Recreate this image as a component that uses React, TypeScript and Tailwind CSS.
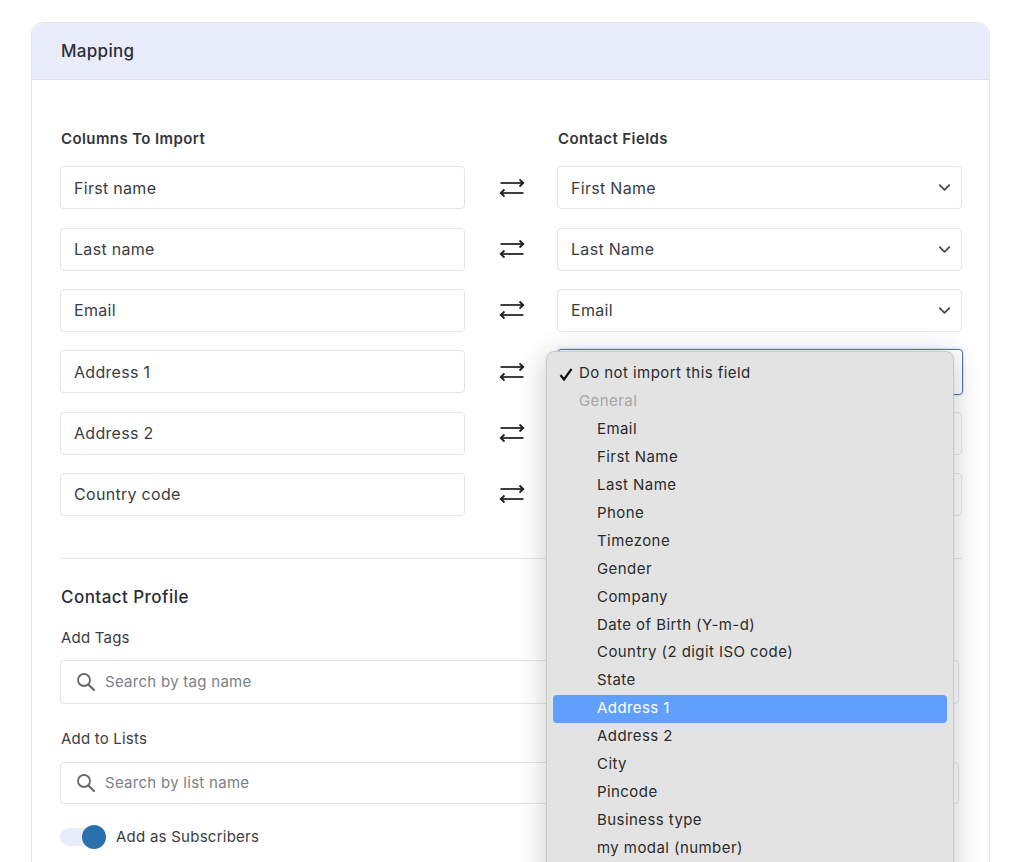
import React from "react";
import { ChevronDown } from "lucide-react";

const rows: [string, string][] = [
  ["First name", "First Name"],
  ["Last name", "Last Name"],
  ["Email", "Email"],
  ["Address 1", ""],
  ["Address 2", ""],
  ["Country code", ""],
];

const options = ["Email","First Name","Last Name","Phone","Timezone","Gender","Company","Date of Birth (Y-m-d)","Country (2 digit ISO code)","State","Address 1","Address 2","City","Pincode","Business type","my modal (number)"];

function Swap() {
  return (
    <svg width="26" height="20" viewBox="0 0 26 20" fill="none" stroke="#1a1a1a" strokeWidth="1.7" className="shrink-0">
      <path d="M1.5 5H24" />
      <path d="M20.5 1.5L24.3 5l-3.8 3.5" />
      <path d="M24.5 15H2" />
      <path d="M5.5 11.5L1.7 15l3.8 3.5" />
    </svg>
  );
}

function SearchIcon() {
  return (
    <svg width="20" height="20" viewBox="0 0 20 20" fill="none" stroke="#666a70" className="shrink-0">
      <circle cx="8" cy="8" r="6" strokeWidth="1.8" />
      <path d="M12.5 12.5L18 18" strokeWidth="2.2" strokeLinecap="round" />
    </svg>
  );
}

function SearchField({ placeholder, className }: { placeholder: string; className: string }) {
  return (
    <div className={"flex items-center w-[899px] rounded border border-[#e2e4e8] bg-white pl-[15px] " + className}>
      <SearchIcon />
      <span className="ml-[9px] text-[15px] tracking-[0.28px] text-[#7c8088]">{placeholder}</span>
    </div>
  );
}

export default function App() {
  return (
    <div className="relative h-[862px] overflow-hidden bg-white text-[#33363b] font-['Inter','Liberation_Sans',sans-serif]">
      <div className="pl-[31px] pt-[22px]">
        <div className="w-[959px] h-[900px] rounded-t-xl border border-[#e4e6ea]">
          <div className="h-[57px] flex items-center pl-[29px] pt-[2px] rounded-t-xl bg-[#e9edfb] border-b border-[#dfe2ea] text-[17px] tracking-[0.3px] font-medium text-[#2c2f36]">Mapping</div>
          <div className="pl-[28px] pr-[27px]">
            <div className="flex pt-[49px] h-[86.4px] text-[15px] tracking-[0.4px] font-semibold text-[#33363b] leading-[20px]">
              <div className="w-[497px] pl-[1px]">Columns To Import</div>
              <div className="pl-[1px]">Contact Fields</div>
            </div>
            <div className="flex flex-col gap-y-[18.3px]">
              {rows.map(([a, b], i) => (
                <div key={i} className="flex items-center h-[43px]">
                  <div className="w-[405px] shrink-0 h-[43px] flex items-center pl-[13px] rounded border border-[#e4e6ea] text-[16px] tracking-[0.3px] text-[#3a3d42]">{a}</div>
                  <div className="w-[92px] shrink-0 flex justify-center pl-[1px]"><Swap /></div>
                  <div className={"shrink-0 flex items-center justify-between pl-[13px] pr-[7px] rounded text-[16px] tracking-[0.3px] text-[#3a3d42] border " + (i === 3 ? "border-[#5673a8] w-[406px] h-[46px] shadow-[0_0_3px_rgba(70,100,170,0.35)]" : "w-[405px] h-[43px] border-[#e4e6ea]")}>
                    <span>{b}</span>
                    {b && <ChevronDown size={19} strokeWidth={2.2} className="text-[#44474d]" />}
                  </div>
                </div>
              ))}
            </div>
            <div className="mt-[42px] border-t border-[#e4e6ea]" />
            <div className="mt-[26px] text-[17px] tracking-[0.45px] leading-[24px] font-medium text-[#2c2f36] pl-[1px]">Contact Profile</div>
            <div className="mt-[19px] text-[15px] tracking-[0.2px] leading-[20px] text-[#3a3d42] pl-[1px]">Add Tags</div>
            <SearchField placeholder="Search by tag name" className="mt-[12px] h-[44px]" />
            <div className="mt-[25px] text-[15px] tracking-[0.2px] leading-[20px] text-[#3a3d42] pl-[1px]">Add to Lists</div>
            <SearchField placeholder="Search by list name" className="mt-[13px] h-[42px]" />
            <div className="mt-[22px] flex items-center">
              <div className="relative w-[47px] h-[24px] -mt-[1px]">
                <div className="absolute left-0 top-[3px] w-[44px] h-[18px] rounded-full bg-[#e9edfb]" />
                <div className="absolute left-[22px] top-0 w-[24px] h-[24px] rounded-full bg-[#2a70ae]" />
              </div>
              <span className="ml-[9px] text-[15px] tracking-[0.25px] text-[#3a3d42]">Add as Subscribers</span>
            </div>
          </div>
        </div>
      </div>

      <div className="absolute left-[546px] top-[351px] w-[408px] h-[560px] rounded-lg border border-[#c9c9c9] bg-[#e3e3e3] px-[6px] pt-[7px] shadow-[0_4px_28px_rgba(0,0,0,0.22)] text-[15px] tracking-[0.43px] text-[#2b2b2b]">
        <div className="relative h-[28px] flex items-center pl-[26px]">
          <svg width="14" height="13" viewBox="0 0 14 13" fill="none" stroke="#111" strokeWidth="2.2" className="absolute left-[6px] top-[9px]">
            <path d="M1.5 7l3.5 4.5L12.5 1" />
          </svg>
          Do not import this field
        </div>
        <div className="h-[28px] flex items-center pl-[26px] text-[#a5a5a5]">General</div>
        {options.map((o) => (
          <div key={o} className={"h-[27.97px] flex items-center pl-[44px] rounded " + (o === "Address 1" ? "bg-[#619ffc] text-white" : "")}>{o}</div>
        ))}
      </div>
    </div>
  );
}
